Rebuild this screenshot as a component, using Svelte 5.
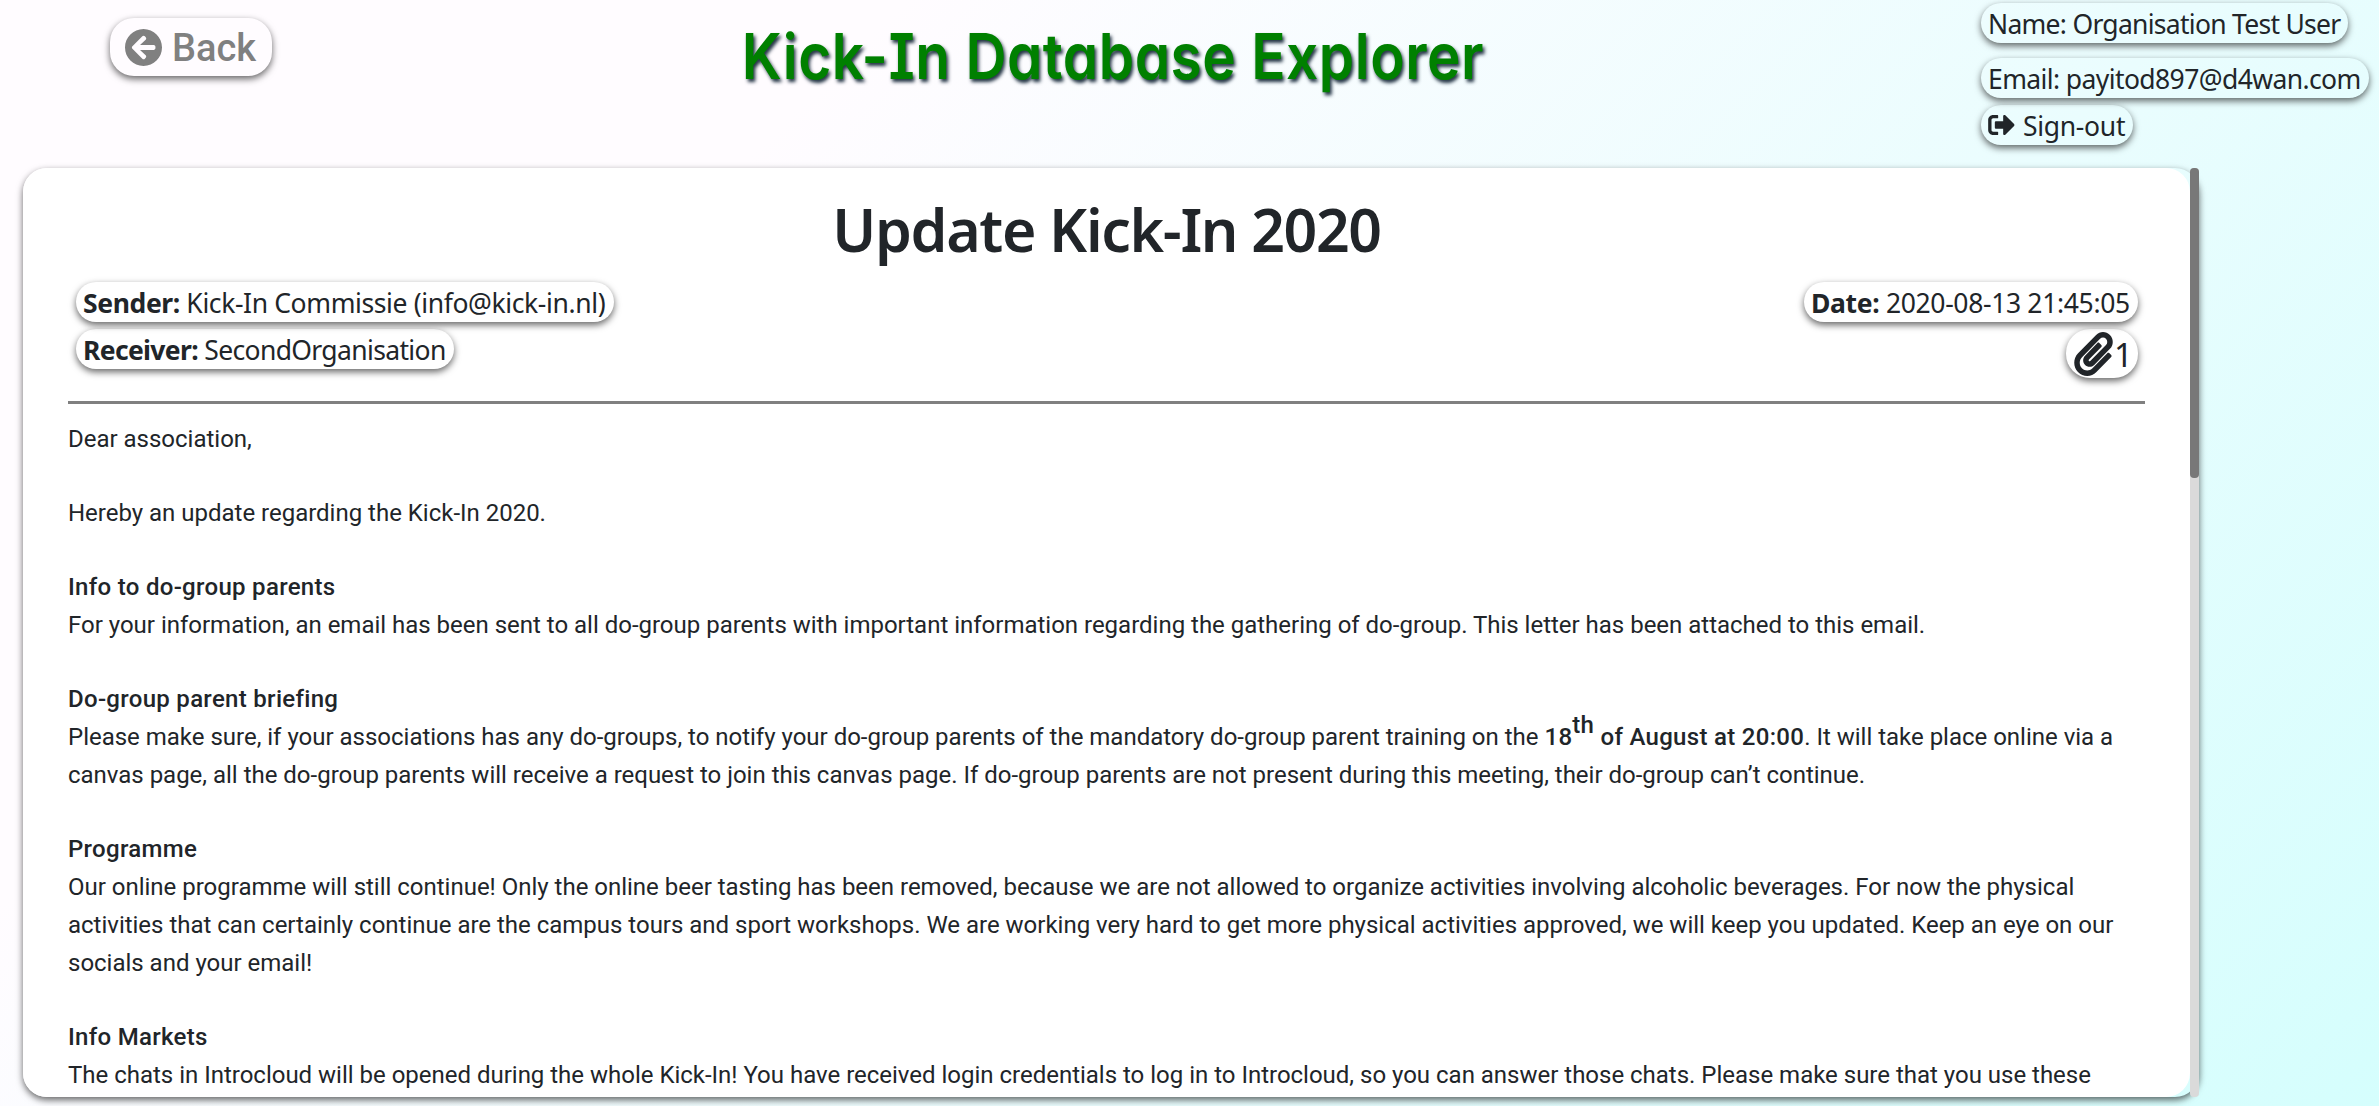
<script>
  const sections = [
    { lines: ['Dear association,'] },
    { lines: ['Hereby an update regarding the Kick-In 2020.'] },
    {
      title: 'Info to do-group parents',
      lines: [
        'For your information, an email has been sent to all do-group parents with important information regarding the gathering of do-group. This letter has been attached to this email.'
      ]
    },
    {
      title: 'Do-group parent briefing',
      lead: 'Please make sure, if your associations has any do-groups, to notify your do-group parents of the mandatory do-group parent training on the ',
      tail: '. It will take place online via a',
      lines: [
        'canvas page, all the do-group parents will receive a request to join this canvas page. If do-group parents are not present during this meeting, their do-group can’t continue.'
      ]
    },
    {
      title: 'Programme',
      lines: [
        'Our online programme will still continue! Only the online beer tasting has been removed, because we are not allowed to organize activities involving alcoholic beverages. For now the physical',
        'activities that can certainly continue are the campus tours and sport workshops. We are working very hard to get more physical activities approved, we will keep you updated. Keep an eye on our',
        'socials and your email!'
      ]
    },
    {
      title: 'Info Markets',
      lines: [
        'The chats in Introcloud will be opened during the whole Kick-In! You have received login credentials to log in to Introcloud, so you can answer those chats. Please make sure that you use these'
      ]
    }
  ];
</script>

<div class="page">
  <header>
    <button class="back">
      <svg viewBox="8 8 496 496"><path d="M256 504C119 504 8 393 8 256S119 8 256 8s248 111 248 248-111 248-248 248zm28.900-143.600L209.400 288H392c13.300 0 24-10.700 24-24v-16c0-13.300-10.700-24-24-24H209.400l75.500-72.400c9.700-9.300 9.900-24.800.4-34.300l-11-10.900c-9.400-9.400-24.600-9.400-33.900 0L107.700 239c-9.400 9.400-9.400 24.600 0 33.900l132.700 132.700c9.400 9.400 24.600 9.400 33.900 0l11-10.900c9.500-9.500 9.300-25-.4-34.300z" /></svg>
      <span>Back</span>
    </button>
    <div class="brand">Kick-In Database Explorer</div>
    <div class="user">
      <div class="pill name">Name: Organisation Test User</div>
      <div class="pill email">Email: payitod897@d4wan.com</div>
      <div class="pill signout">
        <svg viewBox="0 64 512 384"><path d="M497 273L329 441c-15 15-41 4.500-41-17v-96H152c-13.300 0-24-10.700-24-24v-96c0-13.300 10.700-24 24-24h136V88c0-21.400 25.900-32 41-17l168 168c9.300 9.400 9.300 24.600 0 34zM192 436v-40c0-6.600-5.400-12-12-12H96c-17.700 0-32-14.300-32-32V160c0-17.700 14.300-32 32-32h84c6.600 0 12-5.400 12-12V76c0-6.600-5.400-12-12-12H96c-53 0-96 43-96 96v192c0 53 43 96 96 96h84c6.600 0 12-5.400 12-12z" /></svg>
        <span>Sign-out</span>
      </div>
    </div>
  </header>

  <main>
    <article>
      <h1>Update Kick-In 2020</h1>
      <div class="meta">
        <div class="col">
          <div class="pill sender"><b>Sender:</b> Kick-In Commissie (info@kick-in.nl)</div>
          <div class="pill receiver"><b>Receiver:</b> SecondOrganisation</div>
        </div>
        <div class="col right">
          <div class="pill date"><b>Date:</b> 2020-08-13 21:45:05</div>
          <div class="pill clip">
            <svg viewBox="0 0 448 512"><path d="M43.246 466.142c-58.430-60.289-57.341-157.511 1.386-217.581L254.392 34c44.316-45.332 116.351-45.336 160.671 0 43.890 44.894 43.943 117.329 0 162.276L232.214 383.128c-29.855 30.537-78.633 30.111-107.982-.998-28.275-29.970-27.368-77.473 1.452-106.953l143.743-146.835c6.182-6.314 16.312-6.422 22.626-.241l22.861 22.379c6.315 6.182 6.422 16.312.241 22.626L171.427 319.927c-4.932 5.045-5.236 13.428-.648 18.292 4.372 4.634 11.245 4.711 15.688.165l182.849-186.851c19.613-20.062 19.613-52.725-.011-72.798-19.189-19.627-49.957-19.637-69.154 0L90.390 293.295c-34.763 35.560-35.299 93.120-1.191 128.313 34.010 35.093 88.985 35.137 123.058.286l172.060-175.999c6.177-6.319 16.307-6.433 22.626-.256l22.877 22.364c6.319 6.177 6.434 16.307.256 22.626l-172.060 175.998c-59.576 60.938-155.943 60.216-214.770-.485z" /></svg>
            <span>1</span>
          </div>
        </div>
      </div>
      <hr />
      <div class="body">
        {#each sections as s}
          <section>
            {#if s.title}<p><strong>{s.title}</strong></p>{/if}
            {#if s.lead}
              <p>{s.lead}<strong>18<sup>th</sup> of August at 20:00</strong>{s.tail}</p>
            {/if}
            {#each s.lines as line}<p>{line}</p>{/each}
          </section>
        {/each}
      </div>
    </article>
    <div class="track"><div class="thumb"></div></div>
  </main>
</div>

<style>
  :global(body) {
    margin: 0;
    overflow: hidden;
  }
  .page {
    box-sizing: border-box;
    width: 2379px;
    height: 1106px;
    overflow: hidden;
    background: linear-gradient(315deg, #d5fefd 0%, #fffcff 74%);
    color: #212529;
    font-family: 'Segoe UI', 'Noto Sans', sans-serif;
    font-size: 26.5px;
  }
  header {
    display: grid;
    grid-template-columns: 502px 1002px 1fr;
    height: 168px;
    box-sizing: border-box;
    padding: 3px 0 0 110px;
    align-items: start;
  }
  .back,
  .pill {
    box-shadow: 0 3px 7px rgba(0, 0, 0, 0.6);
  }
  .back {
    display: flex;
    align-items: center;
    gap: 10px;
    width: 162px;
    height: 58px;
    margin-top: 15px;
    padding: 0 0 0 15px;
    box-sizing: border-box;
    border: 0;
    border-radius: 24px;
    background: transparent;
    color: #808080;
    font: 500 38px/60px Roboto, sans-serif;
  }
  .back svg {
    width: 37px;
    height: 37px;
    flex: none;
  }
  .back span {
    padding-top: 2px;
  }
  svg {
    fill: currentColor;
    display: block;
  }
  .brand {
    font: 600 63px/90px 'Comic Sans MS', Inter, sans-serif;
    font-feature-settings: 'cv11', 'cv08';
    color: green;
    text-align: center;
    white-space: nowrap;
    margin-top: 8px;
    letter-spacing: 0.6px;
    transform: scaleX(0.9);
    text-shadow: 2px 3px 4px #234;
  }
  .user {
    display: flex;
    flex-direction: column;
    align-items: flex-start;
    padding-left: 367px;
  }
  .pill {
    box-sizing: border-box;
    height: 40px;
    line-height: 42px;
    padding-left: 7px;
    border-radius: 20px;
    white-space: nowrap;
  }
  .name {
    width: 367px;
    margin-bottom: 15px;
    letter-spacing: -0.72px;
  }
  .email {
    width: 388px;
    margin-bottom: 7px;
    letter-spacing: -0.6px;
  }
  .signout {
    width: 152px;
    display: flex;
    align-items: center;
    gap: 8px;
    padding-left: 7px;
    letter-spacing: -0.3px;
  }
  .signout span {
    padding-top: 2px;
  }
  .signout svg {
    width: 27px;
    height: 20px;
  }
  main {
    display: flex;
    width: 2176px;
    height: 929px;
    margin-left: 23px;
    border-radius: 24px;
    box-shadow: 0 3px 7px rgba(0, 0, 0, 0.6);
  }
  article {
    box-sizing: border-box;
    width: 2167px;
    padding: 24px 45px 0;
    overflow: hidden;
    background: #fff;
    border-radius: 24px;
  }
  .track {
    width: 9px;
    background: #dadada;
    border-radius: 4px;
  }
  .thumb {
    height: 310px;
    background: #787878;
    border-radius: 4px;
  }
  h1 {
    margin: 0;
    height: 90px;
    text-align: center;
    font-size: 59px;
    font-weight: 600;
    line-height: 75px;
    letter-spacing: -1.35px;
  }
  .meta {
    display: flex;
    justify-content: space-between;
    height: 119px;
    padding: 0 7px 0 8px;
  }
  .col {
    display: flex;
    flex-direction: column;
    gap: 7px;
  }
  .right {
    align-items: flex-end;
  }
  .sender {
    width: 538px;
    letter-spacing: -0.38px;
  }
  .receiver {
    width: 378px;
    letter-spacing: -0.65px;
  }
  .date {
    width: 334px;
    letter-spacing: -0.34px;
  }
  .clip {
    display: flex;
    align-items: center;
    gap: 1px;
    width: 72px;
    height: 49px;
    padding-left: 8px;
    border-radius: 24px;
    font-size: 33px;
    line-height: 49px;
  }
  .clip span {
    padding-top: 1px;
  }
  .clip svg {
    width: 39px;
    height: 44px;
    flex: none;
  }
  hr {
    margin: 0 0 16px;
    border: 0;
    height: 3px;
    background: #808080;
  }
  .body {
    display: flex;
    flex-direction: column;
    gap: 36px;
    font: 400 24px/38px Roboto, sans-serif;
    letter-spacing: -0.01px;
    white-space: nowrap;
  }
  p {
    margin: 0;
    height: 38px;
  }
  strong {
    font-weight: 500;
    letter-spacing: 0.3px;
  }
  sup {
    font-size: 24px;
    line-height: 0;
    position: relative;
    top: -12px;
    vertical-align: baseline;
  }
</style>
